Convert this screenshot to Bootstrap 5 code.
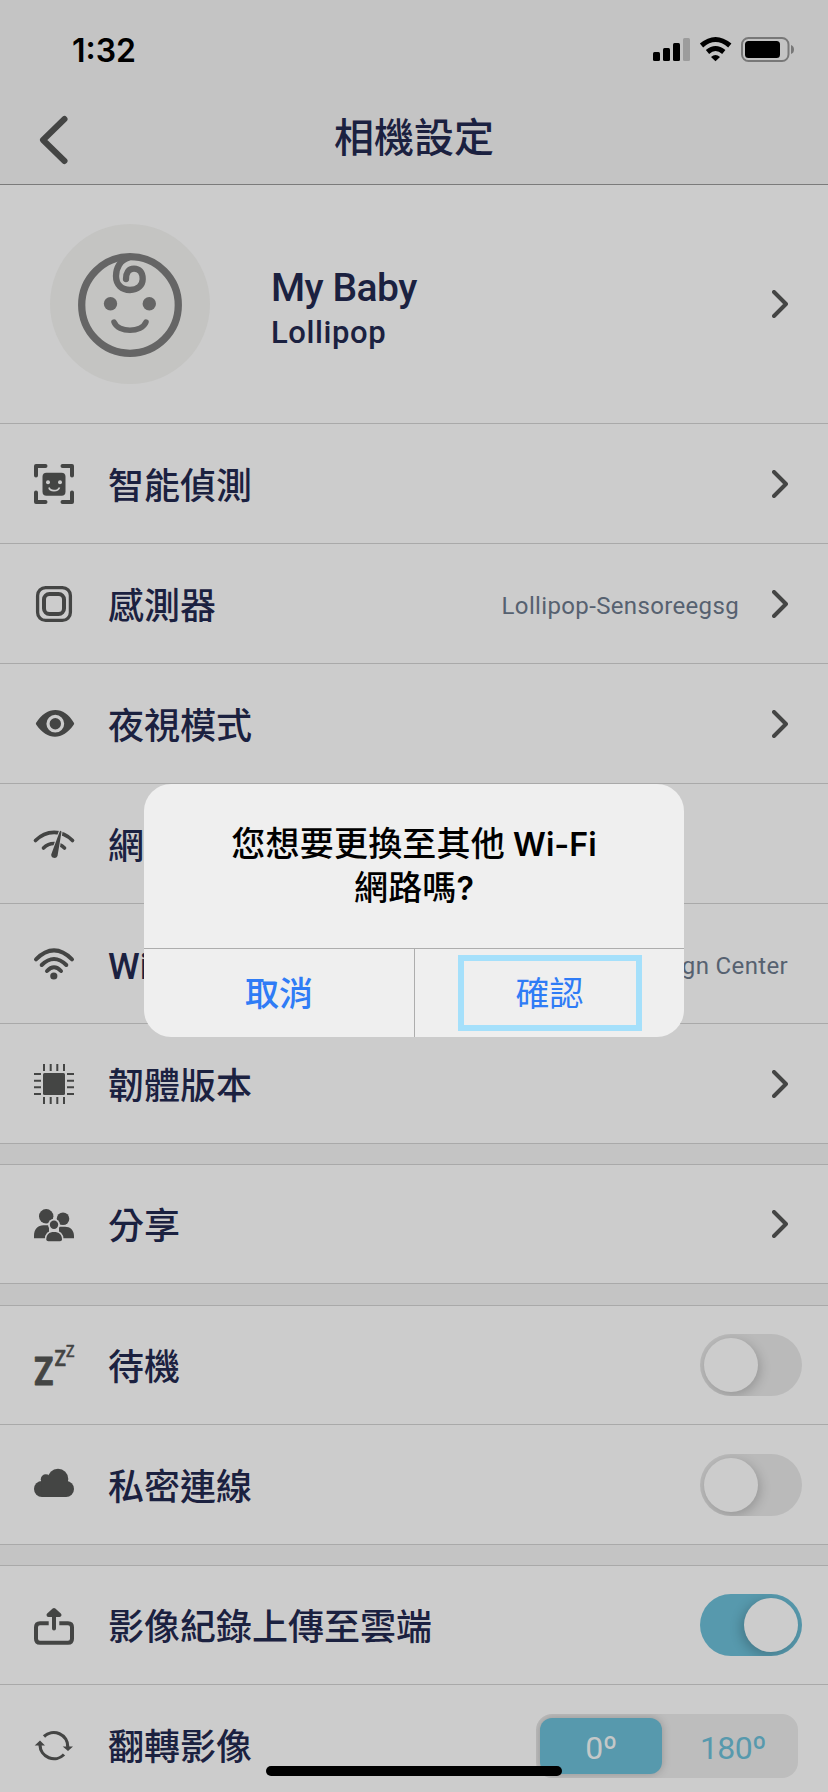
<!DOCTYPE html>
<html lang="zh-Hant">
<head>
<meta charset="utf-8">
<meta name="viewport" content="width=device-width, initial-scale=1">
<title>相機設定</title>
<link href="https://cdn.jsdelivr.net/npm/bootstrap@5.3.0/dist/css/bootstrap.min.css" rel="stylesheet">
<style>
  :root { --ink:#1b2140; --icon:#444544; --line:#a9a9a9; --teal:#5799ad; }
  body { background:#c4c4c4; color:var(--ink); font-family:Roboto,"Noto Sans CJK TC",sans-serif; }
  .screen { height:1792px; overflow:hidden; }
  svg { display:block; flex:none; overflow:visible; }
  .status { height:88px; padding:0 34px 0 72px; font:600 32px/1 Inter,sans-serif; color:#000; }
  .clock { padding-top:13px; }
  .topbar { height:97px; border-bottom:1px solid #7b7b7b; padding:0 40px; }
  .topbar h1 { font-size:40px; font-weight:500; line-height:1; padding-top:6px; }
  .group { background:#ccc; }
  .group + .group { margin-top:20px; border-top:1px solid var(--line); }
  .group + .group.power { margin-top:21px; }
  .item { height:120px; border-bottom:1px solid var(--line); padding:0 40px 0 34px; }
  .item.first { height:119px; }
  .profile { height:239px; padding-left:50px; }
  .who { margin-left:61px; padding-top:10px; }
  .glyph { width:40px; height:40px; margin-right:34px; color:var(--icon); margin-top:1px; }
  .power .glyph { margin-top:-1px; }
  .title { font-size:36px; font-weight:500; line-height:52px; padding-top:6px; white-space:nowrap; }
  .detail { font-size:24px; color:#566170; white-space:nowrap; padding-top:4px; letter-spacing:.35px; }
  .after { margin-left:33px; }
  .name { font-size:39px; font-weight:500; line-height:48px; letter-spacing:-.5px; }
  .model { font-size:31px; font-weight:500; line-height:42px; letter-spacing:.6px; }
  .toggle { width:102px; height:62px; padding:4px; margin-right:-14px; background:#bababa; overflow:hidden; }
  .knob { width:54px; height:54px; background:#ccc; box-shadow:2px 3px 12px rgba(0,0,0,.2); }
  .toggle.on { background:var(--teal); }
  .toggle.on .knob { box-shadow:-3px 3px 12px rgba(0,0,0,.22); }
  .segments { width:262px; height:64px; padding:4px; margin:3px -10px 0 0; border-radius:16px; background:#bdbdbd; font-size:32px; color:var(--teal); overflow:hidden; line-height:1; }
  .segments .chosen { width:122px; height:56px; border-radius:12px; background:var(--teal); color:#c4c8c8; box-shadow:0 0 10px rgba(0,0,0,.22); }
  .segments span { padding-top:3px; letter-spacing:-.6px; }
  .segments .other { padding-left:10px; }
  .alertbox { left:144px; top:784px; width:540px; height:253px; border-radius:27px; background:#efefef; color:#000; overflow:hidden; }
  .question { height:164px; padding-top:39px; font:600 32.2px/44px Inter,"Noto Sans CJK TC",sans-serif; }
  .question span { font-size:34px; font-weight:500; letter-spacing:.2px; line-height:1; }
  .actions { height:89px; border-top:1px solid #adadad; font-size:34px; color:#2f7cf6; line-height:1; }
  .actions > div + div { border-left:1px solid #adadad; }
  .actions span { padding-top:2px; }
  .cancel { font-weight:500; }
  .framed { width:184px; height:76px; border:6px solid #a5e0fb; }
  .homebar { left:266px; top:1766px; width:296px; height:10px; border-radius:5px; background:#000; }
</style>
</head>
<body>
<svg width="0" height="0" class="position-absolute" aria-hidden="true">
  <symbol id="next" viewBox="0 0 16 28"><path d="M2 2 14 14 2 26" fill="none" stroke="#444544" stroke-width="4" stroke-linecap="round" stroke-linejoin="round"/></symbol>
</svg>
<div class="screen position-relative">
  <header>
    <div class="status d-flex justify-content-between align-items-center">
      <span class="clock">1:32</span>
      <svg width="142" height="26" viewBox="652 36 142 26" style="margin-top:10px">
        <rect x="653" y="52" width="7" height="9" rx="1.500"/><rect x="663" y="48" width="7" height="13" rx="1.500"/><rect x="673" y="43" width="7" height="18" rx="1.500"/><rect x="683" y="38" width="7" height="23" rx="1.500" fill="#9c9c9c"/>
        <path d="M701.500 45.500Q715.500 33.500 729.800 45.500M707.500 52Q715.500 45 723.800 52" fill="none" stroke="#000" stroke-width="5"/>
        <path d="M711 57Q715.500 53 720 57L715.500 61.200Z"/>
        <rect x="742" y="38" width="46.500" height="23" rx="6.500" fill="none" stroke="#787878" stroke-width="2"/>
        <rect x="745" y="41" width="35" height="17" rx="3.500"/>
        <path d="M791 45Q794 46 794 49.500Q794 53 791 54Z" fill="#787878"/>
      </svg>
    </div>
    <div class="topbar d-flex align-items-center justify-content-between">
      <svg width="27" height="48" viewBox="40 116 27 48" class="mt-2"><path d="M64.500 119 43 140 64.500 161" fill="none" stroke="#444544" stroke-width="6" stroke-linecap="round" stroke-linejoin="round"/></svg>
      <h1 class="mb-0">相機設定</h1>
      <span style="width:27px"></span>
    </div>
  </header>

  <main>
    <section class="group">
      <div class="item profile d-flex align-items-center">
        <svg width="160" height="160" viewBox="50 224 160 160">
          <circle cx="130" cy="304" r="80" fill="#c4c4c2"/>
          <g fill="none" stroke="#656565" stroke-width="6.300" stroke-linecap="round">
            <circle cx="130" cy="305" r="48.300" stroke-width="7.300"/>
            <path d="M129 257.500C120 260 116 268 116 276C116 285 122 290 130 290C138 290 142.700 285 142.700 279C142.700 272 139 268.700 134 268.700C128.500 268.700 126 273 126 279"/>
            <path d="M114 322C118 333 142 333 146 322" stroke-width="5.500"/>
          </g>
          <g fill="#656565"><circle cx="110.500" cy="303.700" r="6.700"/><circle cx="149.300" cy="303.700" r="6.700"/></g>
        </svg>
        <div class="who"><div class="name">My Baby</div><div class="model">Lollipop</div></div>
        <svg class="ms-auto" width="16" height="28"><use href="#next"/></svg>
      </div>
      <div class="item d-flex align-items-center">
        <svg class="glyph" viewBox="0 0 40 40" fill="none" stroke="currentColor">
          <path d="M2 11.500V2H11.500M28.500 2H38V11.500M38 28.500V38H28.500M11.500 38H2V28.500" stroke-width="4" stroke-linecap="round" stroke-linejoin="round"/>
          <rect x="8.500" y="8.700" width="23" height="23" rx="4" fill="currentColor" stroke="none"/>
          <g fill="#ccc" stroke="none"><circle cx="14" cy="18.200" r="2"/><circle cx="26" cy="18.200" r="2"/></g>
          <path d="M15 23.500Q15.500 26.600 20 26.600T25.500 23.500" stroke="#ccc" stroke-width="1.600"/>
        </svg>
        <div class="title">智能偵測</div><svg class="ms-auto" width="16" height="28"><use href="#next"/></svg>
      </div>
      <div class="item d-flex align-items-center">
        <svg class="glyph" viewBox="0 0 40 40" fill="none" stroke="currentColor">
          <rect x="3.600" y="3.600" width="32.800" height="32.800" rx="8" stroke-width="3.300"/>
          <rect x="10" y="10" width="20" height="20" rx="5.500" stroke-width="4"/>
        </svg>
        <div class="title">感測器</div>
        <div class="detail ms-auto">Lollipop-Sensoreegsg</div><svg class="after" width="16" height="28"><use href="#next"/></svg>
      </div>
      <div class="item d-flex align-items-center">
        <svg class="glyph" viewBox="0 0 40 40">
          <path d="M2 19C13 1.700 30 1.700 40 19Q40.500 20 39.500 21C29 36.500 13 36.500 2.500 21Q1.500 20 2 19Z" fill="currentColor"/>
          <circle cx="21.300" cy="19.700" r="7.300" fill="none" stroke="#ccc" stroke-width="3.200"/>
        </svg>
        <div class="title">夜視模式</div><svg class="ms-auto" width="16" height="28"><use href="#next"/></svg>
      </div>
      <div class="item d-flex align-items-center">
        <svg class="glyph" viewBox="0 0 40 40" fill="none" stroke="currentColor" stroke-width="3.700" stroke-linecap="round">
          <path d="M1.500 16.500C12 5.800 28 5.300 38.500 16.500M9.500 24Q14 19.500 20 19.500T30.500 24"/>
          <path d="M25.700 7.500 17.200 30.500A3.300 3.300 0 0 0 23.500 32L27.500 8Q27 6 25.700 7.500Z" fill="currentColor" stroke="#ccc" stroke-width="2" paint-order="stroke"/>
        </svg>
        <div class="title">網路</div>
      </div>
      <div class="item d-flex align-items-center">
        <svg class="glyph" viewBox="0 0 40 40" fill="none" stroke="currentColor" stroke-width="4" stroke-linecap="round">
          <path d="M2 15.300Q20-2.700 38 15.300M7.700 21Q20 9 32.300 21M13 27Q20 19.500 27 27"/>
          <circle cx="19.800" cy="32" r="3.600" fill="currentColor" stroke="none"/>
        </svg>
        <div class="title">Wi-Fi</div><div class="detail ms-auto">Design Center</div>
      </div>
      <div class="item d-flex align-items-center">
        <svg class="glyph" viewBox="0 0 40 40" stroke="currentColor" stroke-width="2">
          <rect x="9" y="9" width="22" height="22" rx="1.500" fill="currentColor" stroke="none"/>
          <path d="M10 0V7M16.700 0V7M23.300 0V7M30 0V7M10 33V40M16.700 33V40M23.300 33V40M30 33V40M0 10H7M0 16.700H7M0 23.300H7M0 30H7M33 10H40M33 16.700H40M33 23.300H40M33 30H40"/>
        </svg>
        <div class="title">韌體版本</div><svg class="ms-auto" width="16" height="28"><use href="#next"/></svg>
      </div>
    </section>

    <section class="group">
      <div class="item first d-flex align-items-center">
        <svg class="glyph" viewBox="0 0 40 40" fill="currentColor">
          <circle cx="12.200" cy="11.300" r="7.200"/><circle cx="29" cy="13.700" r="6.300"/>
          <path d="M0 33.300V31C0 24 4 20.300 9.500 20.300H15V33.300ZM40 33.300V31C40 25 36 21.800 31 21.800H25V33.300Z"/>
          <circle cx="20" cy="19.800" r="6" fill="#ccc"/><circle cx="20" cy="19.800" r="4.200"/>
          <path d="M12.300 34.500C12.300 29.500 15 27 20 27S28 29.500 28 34.500Q28 36.300 26 36.300H14.300Q12.300 36.300 12.300 34.500Z" stroke="#ccc" stroke-width="3" paint-order="stroke"/>
        </svg>
        <div class="title">分享</div><svg class="ms-auto" width="16" height="28"><use href="#next"/></svg>
      </div>
    </section>

    <section class="group power">
      <div class="item first d-flex align-items-center">
        <svg class="glyph" viewBox="0 0 40 40" fill="currentColor" stroke="currentColor" stroke-linejoin="round" font-family="Roboto, sans-serif" font-weight="700">
          <text x="0" y="39.900" font-size="38" stroke-width=".8" textLength="19.500" lengthAdjust="spacingAndGlyphs">Z</text>
          <text x="20.500" y="21" font-size="21.500" font-weight="500" stroke-width=".5" textLength="11.500" lengthAdjust="spacingAndGlyphs">Z</text>
          <text x="32" y="11.800" font-size="16" font-weight="500" stroke-width=".4" textLength="8.500" lengthAdjust="spacingAndGlyphs">Z</text>
        </svg>
        <div class="title">待機</div>
        <div class="toggle rounded-pill ms-auto"><div class="knob rounded-circle"></div></div>
      </div>
      <div class="item d-flex align-items-center">
        <svg class="glyph" viewBox="0 0 40 40" fill="currentColor">
          <circle cx="24" cy="15" r="10.300"/><circle cx="11.800" cy="15.300" r="5"/><circle cx="8" cy="25" r="8"/><circle cx="32" cy="25" r="8"/><path d="M7 14H34V24L32 33H8Z"/>
        </svg>
        <div class="title">私密連線</div>
        <div class="toggle rounded-pill ms-auto"><div class="knob rounded-circle"></div></div>
      </div>
    </section>

    <section class="group">
      <div class="item first d-flex align-items-center">
        <svg class="glyph" viewBox="0 0 40 40" fill="none" stroke="currentColor" stroke-width="4" stroke-linecap="round" stroke-linejoin="round">
          <path d="M14.700 17.300H6Q2 17.300 2 21.300V32.700Q2 36.700 6 36.700H34Q38 36.700 38 32.700V21.300Q38 17.300 34 17.300H25.300" stroke-linecap="butt"/>
          <path d="M20 5V22.500M14.500 9 20 4 25.500 9Z" />
        </svg>
        <div class="title">影像紀錄上傳至雲端</div>
        <div class="toggle on rounded-pill ms-auto d-flex justify-content-end"><div class="knob rounded-circle"></div></div>
      </div>
      <div class="item d-flex align-items-center">
        <svg class="glyph" viewBox="0 0 40 40" fill="currentColor">
          <path d="M10 11.500A14 14 0 0 1 33.800 22M30 29.500A14 14 0 0 1 6 20" fill="none" stroke="currentColor" stroke-width="3.200"/>
          <path d="M28.700 21.500H39L34 26ZM.7 20.500 6 15.500 11 20.500Z"/>
        </svg>
        <div class="title">翻轉影像</div>
        <div class="segments d-flex ms-auto"><div class="chosen d-flex align-items-center justify-content-center"><span>0º</span></div><div class="other flex-fill d-flex align-items-center justify-content-center"><span>180º</span></div></div>
      </div>
    </section>
  </main>

  <div class="alertbox position-absolute" role="dialog">
    <div class="question text-center"><span>您想要更換至其他</span> Wi-Fi<br><span>網路嗎</span>?</div>
    <div class="actions d-flex">
      <div class="cancel w-50 d-flex align-items-center justify-content-center"><span>取消</span></div>
      <div class="w-50 d-flex align-items-center justify-content-center"><div class="framed d-flex align-items-center justify-content-center"><span>確認</span></div></div>
    </div>
  </div>
  <div class="homebar position-absolute"></div>
</div>
<script src="https://cdn.jsdelivr.net/npm/bootstrap@5.3.0/dist/js/bootstrap.bundle.min.js"></script>
</body>
</html>
